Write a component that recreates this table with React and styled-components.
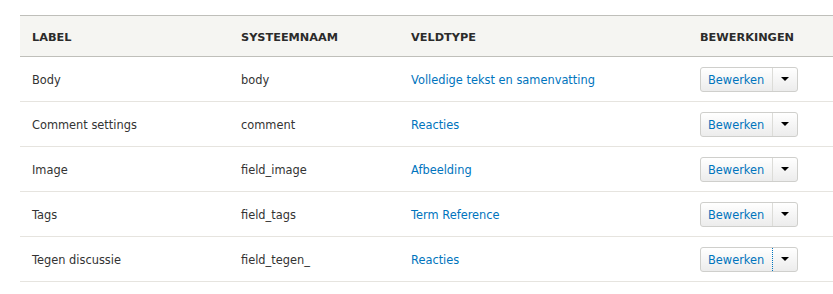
import React from "react";
import styled, { createGlobalStyle } from "styled-components";

const Global = createGlobalStyle`
  html, body { margin: 0; padding: 0; background: #fff; }
  body { font-family: "DejaVu Sans", "Liberation Sans", sans-serif; color: #333; }
`;

const Page = styled.div`
  padding: 15px 0 0 20px;
  overflow: hidden;
`;

const Table = styled.table`
  width: 840px;
  border-collapse: collapse;
  font-size: 11.4px;
  table-layout: fixed;
`;

const Col = styled.col`
  width: ${(p) => p.$w};
`;

const HeadCell = styled.th`
  box-sizing: border-box;
  text-align: left;
  background: #f5f5f2;
  border-top: 1px solid #bfbfba;
  border-bottom: 1px solid #bfbfba;
  height: 41px;
  padding: 2px 12px 0;
  font-size: 11.3px;
  font-weight: bold;
  text-transform: uppercase;
  color: #2b2b2b;
`;

const Row = styled.tr`
  border-bottom: 1px solid #e6e4df;
`;

const Cell = styled.td`
  box-sizing: border-box;
  height: 45px;
  padding: 2px 12px 0;
  vertical-align: middle;
  color: #333;
`;

const Link = styled.a`
  color: #0074bd;
  text-decoration: none;
`;

const Split = styled.div`
  display: inline-flex;
  align-items: stretch;
  height: 23px;
  margin-top: -2px;
  border: 1px solid #cfcfcc;
  border-radius: 3px;
  background: linear-gradient(#ffffff, #ececec);
  vertical-align: middle;
`;

const Action = styled.span`
  display: flex;
  align-items: center;
  padding: 1px 7px 0;
  width: 57px;
  color: #0074bd;
  border-right: 1px ${(p) => (p.$focus ? "dotted #0074bd" : "solid #dcdcd8")};
`;

const Toggle = styled.span`
  display: flex;
  align-items: center;
  justify-content: center;
  width: 24px;
`;

const Caret = styled.span`
  width: 0;
  height: 0;
  border-left: 4px solid transparent;
  border-right: 4px solid transparent;
  border-top: 4px solid #000;
`;

const rows = [
  ["Body", "body", "Volledige tekst en samenvatting"],
  ["Comment settings", "comment", "Reacties"],
  ["Image", "field_image", "Afbeelding"],
  ["Tags", "field_tags", "Term Reference"],
  ["Tegen discussie", "field_tegen_", "Reacties"],
];

export default function App() {
  return (
    <Page>
      <Global />
      <Table>
        <colgroup>
          <Col $w="209px" />
          <Col $w="170px" />
          <Col $w="289px" />
          <Col $w="172px" />
        </colgroup>
        <thead>
          <tr>
            <HeadCell>Label</HeadCell>
            <HeadCell>Systeemnaam</HeadCell>
            <HeadCell>Veldtype</HeadCell>
            <HeadCell>Bewerkingen</HeadCell>
          </tr>
        </thead>
        <tbody>
          {rows.map(([label, name, type], i) => (
            <Row key={name}>
              <Cell>{label}</Cell>
              <Cell>{name}</Cell>
              <Cell>
                <Link href="#">{type}</Link>
              </Cell>
              <Cell>
                <Split>
                  <Action $focus={i === rows.length - 1}>Bewerken</Action>
                  <Toggle>
                    <Caret />
                  </Toggle>
                </Split>
              </Cell>
            </Row>
          ))}
        </tbody>
      </Table>
    </Page>
  );
}
